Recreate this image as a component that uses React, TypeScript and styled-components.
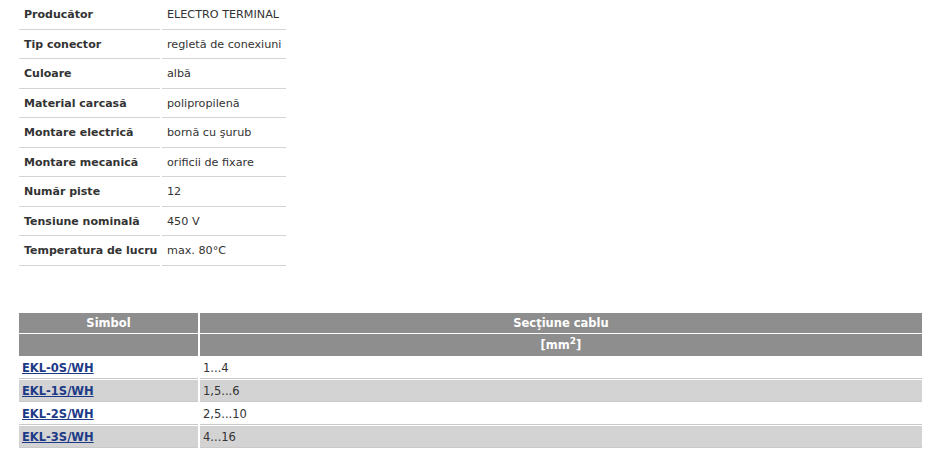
import React from "react";
import styled, { createGlobalStyle } from "styled-components";

const Global = createGlobalStyle`
  html, body { margin: 0; padding: 0; background: #fff; }
  body { font-family: "DejaVu Sans", Verdana, sans-serif; color: #333; }
`;

const Page = styled.div`
  display: flex;
  flex-direction: column;
  padding: 0 10px 0 19px;
`;

const SpecTable = styled.table`
  border-collapse: separate;
  border-spacing: 2px 0;
  margin-left: -2px;
  font-size: 11.2px;
  line-height: 14px;
  width: 271px;
  table-layout: fixed;
`;

const Label = styled.td`
  padding: 1px 0 0 5px;
  font-size: 11px;
  font-weight: bold;
  color: #333;
  border-bottom: 1px solid #d4d4d4;
  white-space: nowrap;
  vertical-align: middle;
`;

const Value = styled.td`
  padding: 1px 0 0 5px;
  color: #333;
  border-bottom: 1px solid #d4d4d4;
  white-space: nowrap;
  vertical-align: middle;
`;

const SpecRow = styled.tr<{ $tall?: boolean }>`
  & > td { height: ${(p) => (p.$tall ? 28 : 27)}px; }
`;

const ProductTable = styled.table`
  margin-top: 46px;
  margin-left: -2px;
  border-collapse: separate;
  border-spacing: 2px 1px;
  width: 907px;
  table-layout: fixed;
  font-size: 11.5px;
  line-height: 14px;
`;

const HeadCell = styled.th<{ $h: number }>`
  background: #8e8e8e;
  color: #fff;
  font-weight: bold;
  text-align: center;
  height: ${(p) => p.$h}px;
  padding: 0;
  vertical-align: middle;
  sup { font-size: 9px; line-height: 0; }
`;

const DataCell = styled.td<{ $alt: boolean }>`
  background: ${(p) => (p.$alt ? "#d3d3d3" : "#fff")};
  border-bottom: 1px solid #c9c9c9;
  height: 20px;
  padding: 1px 0 0 3px;
  color: #333;
  vertical-align: middle;
  white-space: nowrap;
`;

const SymbolLink = styled.a`
  color: #1d3a87;
  font-weight: bold;
  text-decoration: underline;
`;

const specs: [string, string][] = [
  ["Producător", "ELECTRO TERMINAL"],
  ["Tip conector", "regletă de conexiuni"],
  ["Culoare", "albă"],
  ["Material carcasă", "polipropilenă"],
  ["Montare electrică", "bornă cu şurub"],
  ["Montare mecanică", "orificii de fixare"],
  ["Număr piste", "12"],
  ["Tensiune nominală", "450 V"],
  ["Temperatura de lucru", "max. 80°C"],
];

const products: [string, string][] = [
  ["EKL-0S/WH", "1...4"],
  ["EKL-1S/WH", "1,5...6"],
  ["EKL-2S/WH", "2,5...10"],
  ["EKL-3S/WH", "4...16"],
];

export default function App() {
  return (
    <>
      <Global />
      <Page>
        <SpecTable>
          <colgroup>
            <col style={{ width: 141 }} />
            <col />
          </colgroup>
          <tbody>
            {specs.map(([k, v], i) => (
              <SpecRow key={k} $tall={i % 2 === 0}>
                <Label>{k}</Label>
                <Value>{v}</Value>
              </SpecRow>
            ))}
          </tbody>
        </SpecTable>
        <ProductTable>
          <colgroup>
            <col style={{ width: 179 }} />
            <col />
          </colgroup>
          <thead>
            <tr>
              <HeadCell $h={20}>Simbol</HeadCell>
              <HeadCell $h={20}>Secţiune cablu</HeadCell>
            </tr>
            <tr>
              <HeadCell $h={22}></HeadCell>
              <HeadCell $h={22}>
                [mm<sup>2</sup>]
              </HeadCell>
            </tr>
          </thead>
          <tbody>
            {products.map(([s, v], i) => (
              <tr key={s}>
                <DataCell $alt={i % 2 === 1}>
                  <SymbolLink href="#">{s}</SymbolLink>
                </DataCell>
                <DataCell $alt={i % 2 === 1}>{v}</DataCell>
              </tr>
            ))}
          </tbody>
        </ProductTable>
      </Page>
    </>
  );
}
